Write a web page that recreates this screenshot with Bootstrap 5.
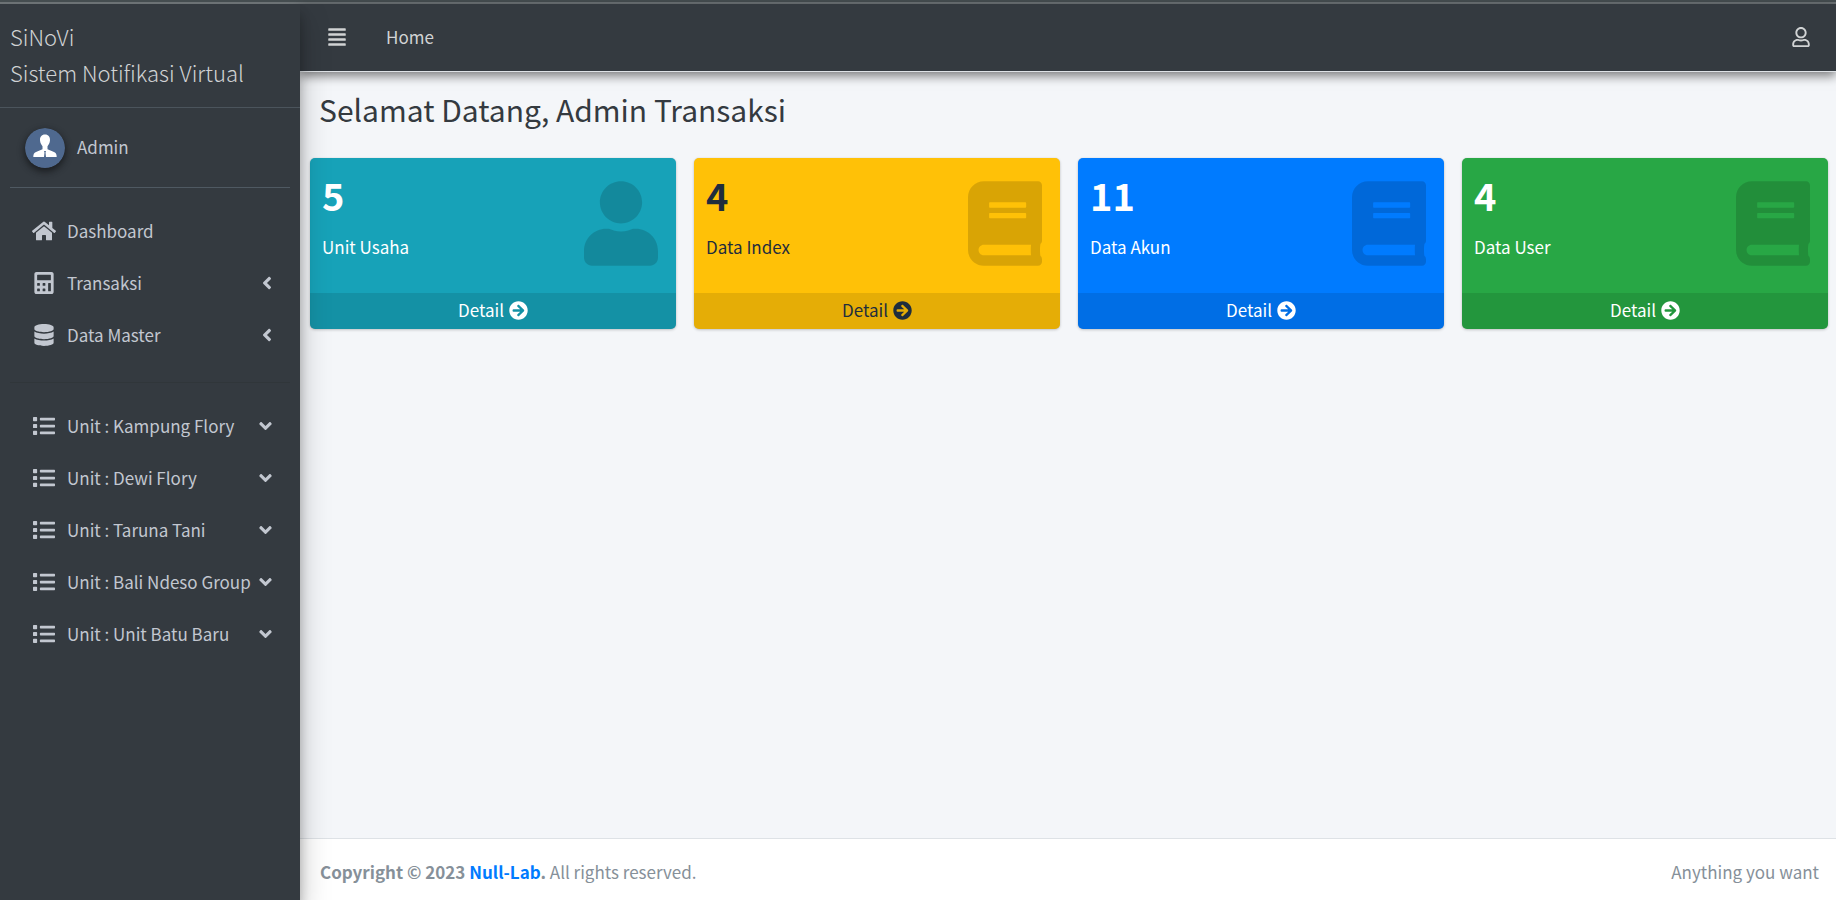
<!DOCTYPE html>
<html lang="id">
<head>
<meta charset="utf-8">
<meta name="viewport" content="width=device-width, initial-scale=1">
<title>SiNoVi - Dashboard</title>
<link href="https://cdn.jsdelivr.net/npm/bootstrap@5.3.0/dist/css/bootstrap.min.css" rel="stylesheet">
<style>
  body { font-family: "Noto Sans CJK SC", "Open Sans", sans-serif; font-size: 17px; line-height: 30px; background: #f4f6f9; color: #212529; }
  a { text-decoration: none; }
  svg { fill: currentColor; flex: none; }
  .top-strip { height: 4px; background: #6c7275; border-top: 2px solid #454d50; }
  .side { width: 300px; flex: none; background: #343a40; color: #c2c7d0; z-index: 3; box-shadow: 0 14px 28px rgba(0,0,0,.25), 0 10px 10px rgba(0,0,0,.22); clip-path: inset(0 -60px 0 0); }
  .side a { color: #c2c7d0; }
  .side .brand-text { display: block; padding: 14px 10px 17px; font-size: 22px; font-weight: 300; line-height: 36px; color: #d0d2d4; border-bottom: 1px solid #4b545c; }
  .user-panel { margin: 0 10px; padding: 19px 15px; height: 80px; border-bottom: 1px solid #4f5962; }
  .user-panel a { padding-bottom: 2px; }
  .avatar { border-radius: 50%; box-shadow: 0 3px 6px rgba(0,0,0,.3), 0 3px 8px rgba(0,0,0,.3); }
  .side-menu { padding: 17px 10px 0; }
  .side-menu a { height: 52px; padding: 0 18px 0 22px; }
  .side-menu a > svg:first-child { width: 24px; height: 22px; margin-right: 11px; }
  .side-menu .item-label { flex: 1; white-space: nowrap; }
  .split { height: 1px; margin: 21px 0 17px; background: #30363a; }
  .topbar { height: 68px; flex: none; background: #343a40; border-bottom: 1px solid #dee2e6; padding: 0 26px 2px 28px; box-shadow: 0 4px 10px rgba(0,0,0,.5); z-index: 2; }
  .topbar a, .topbar button { color: #d1d3d4; }
  .topbar button { background: none; border: 0; padding: 0; display: flex; }
  .page-title { font-size: 30px; font-weight: 400; line-height: 44px; margin: 0; padding: 15px 19px 27px; color: #343a40; }
  .stats { display: grid; grid-template-columns: repeat(4, 1fr); gap: 18px; padding: 0 8px 0 10px; }
  .stat { border-radius: 5px; overflow: hidden; color: #fff; box-shadow: 0 0 1px rgba(0,0,0,.13), 0 1px 3px rgba(0,0,0,.2); }
  .stat-body { height: 135px; padding: 12px 18px 0 12px; }
  .stat-num { font-size: 38px; font-weight: 700; line-height: 50px; margin: 0 0 12px; }
  .stat-body svg { width: 74px; height: 85px; margin-top: 11px; color: rgba(0,0,0,.15); }
  .stat-link { height: 36px; padding-bottom: 2px; background: rgba(0,0,0,.1); color: inherit; gap: 5px; }
  .c-info { background: #17a2b8; }
  .c-warning { background: #ffc107; color: #1f2d3d; }
  .c-primary { background: #007bff; }
  .c-success { background: #28a745; }
  .foot { height: 62px; flex: none; padding: 4px 17px 0 20px; border-top: 1px solid #dee2e6; background: #fff; color: #869099; }
  .foot a { color: #007bff; }
  @media (max-width: 1100px) { .stats { grid-template-columns: repeat(2, 1fr); } }
</style>
</head>
<body class="d-flex flex-column min-vh-100">
<svg class="d-none" aria-hidden="true">
  <symbol id="i-bars" viewBox="0 0 448 512"><path d="M432 416H16a16 16 0 0 0-16 16v32a16 16 0 0 0 16 16h416a16 16 0 0 0 16-16v-32a16 16 0 0 0-16-16zm0-128H16a16 16 0 0 0-16 16v32a16 16 0 0 0 16 16h416a16 16 0 0 0 16-16v-32a16 16 0 0 0-16-16zm0-128H16a16 16 0 0 0-16 16v32a16 16 0 0 0 16 16h416a16 16 0 0 0 16-16v-32a16 16 0 0 0-16-16zm0-128H16A16 16 0 0 0 0 48v32a16 16 0 0 0 16 16h416a16 16 0 0 0 16-16V48a16 16 0 0 0-16-16z"/></symbol>
  <symbol id="i-user-o" viewBox="0 0 448 512"><path d="M313.6 304c-28.7 0-42.5 16-89.6 16-47.1 0-60.8-16-89.6-16C60.2 304 0 364.2 0 438.4V464c0 26.5 21.5 48 48 48h352c26.5 0 48-21.5 48-48v-25.6c0-74.2-60.2-134.4-134.4-134.4zM400 464H48v-25.6c0-47.6 38.8-86.4 86.4-86.4 14.6 0 38.3 16 89.6 16 51.7 0 74.9-16 89.6-16 47.6 0 86.4 38.8 86.4 86.4V464zM224 288c79.5 0 144-64.5 144-144S303.5 0 224 0 80 64.5 80 144s64.5 144 144 144zm0-240c52.9 0 96 43.1 96 96s-43.1 96-96 96-96-43.1-96-96 43.1-96 96-96z"/></symbol>
  <symbol id="i-user" viewBox="0 0 448 512"><path d="M224 256c70.7 0 128-57.3 128-128S294.7 0 224 0 96 57.3 96 128s57.3 128 128 128zm89.6 32h-16.7c-22.2 10.2-46.9 16-72.9 16s-50.6-5.8-72.9-16h-16.7C60.2 288 0 348.2 0 422.4V464c0 26.5 21.5 48 48 48h352c26.5 0 48-21.5 48-48v-41.6c0-74.2-60.2-134.4-134.4-134.4z"/></symbol>
  <symbol id="i-book" viewBox="0 0 448 512"><path d="M448 360V24c0-13.3-10.7-24-24-24H96C43 0 0 43 0 96v320c0 53 43 96 96 96h328c13.3 0 24-10.7 24-24v-16c0-7.5-3.5-14.3-8.9-18.7-4.2-15.4-4.2-59.3 0-74.7 5.4-4.3 8.9-11.1 8.9-18.6zM128 134c0-3.3 2.7-6 6-6h212c3.3 0 6 2.7 6 6v20c0 3.3-2.7 6-6 6H134c-3.3 0-6-2.7-6-6v-20zm0 64c0-3.3 2.7-6 6-6h212c3.3 0 6 2.7 6 6v20c0 3.3-2.7 6-6 6H134c-3.3 0-6-2.7-6-6v-20zm253.4 250H96c-17.7 0-32-14.3-32-32 0-17.6 14.4-32 32-32h285.4c-1.9 17.1-1.9 46.9 0 64z"/></symbol>
  <symbol id="i-go" viewBox="0 0 512 512"><path d="M256 8c137 0 248 111 248 248S393 504 256 504 8 393 8 256 119 8 256 8zm-28.9 143.6l75.5 72.4H120c-13.3 0-24 10.7-24 24v16c0 13.3 10.7 24 24 24h182.6l-75.5 72.4c-9.7 9.3-9.9 24.8-.4 34.3l11 10.9c9.4 9.4 24.6 9.4 33.9 0L404.3 273c9.4-9.4 9.4-24.6 0-33.9L271.6 106.3c-9.4-9.4-24.6-9.4-33.9 0l-11 10.9c-9.5 9.6-9.3 25.1.4 34.4z"/></symbol>
  <symbol id="i-home" viewBox="0 0 576 512"><path d="M280.37 148.26L96 300.11V464a16 16 0 0 0 16 16l112.06-.29a16 16 0 0 0 15.92-16V368a16 16 0 0 1 16-16h64a16 16 0 0 1 16 16v95.64a16 16 0 0 0 16 16.05L464 480a16 16 0 0 0 16-16V300L295.67 148.26a12.19 12.19 0 0 0-15.3 0zM571.6 251.47L488 182.56V44.05a12 12 0 0 0-12-12h-56a12 12 0 0 0-12 12v72.61L318.47 43a48 48 0 0 0-61 0L4.34 251.47a12 12 0 0 0-1.6 16.9l25.5 31A12 12 0 0 0 45.15 301l235.22-193.74a12.19 12.19 0 0 1 15.3 0L530.9 301a12 12 0 0 0 16.9-1.6l25.5-31a12 12 0 0 0-1.7-16.93z"/></symbol>
  <symbol id="i-calc" viewBox="0 0 448 512"><path fill-rule="evenodd" d="M400 0H48C22 0 0 22 0 48v416c0 26 22 48 48 48h352c26 0 48-22 48-48V48c0-26-22-48-48-48zM77 64h294q13 0 13 13v102q0 13-13 13H77q-13 0-13-13V77q0-13 13-13zM77 256h38q13 0 13 13v38q0 13-13 13H77q-13 0-13-13v-38q0-13 13-13zM205 256h38q13 0 13 13v38q0 13-13 13h-38q-13 0-13-13v-38q0-13 13-13zM77 384h38q13 0 13 13v38q0 13-13 13H77q-13 0-13-13v-38q0-13 13-13zM205 384h38q13 0 13 13v38q0 13-13 13h-38q-13 0-13-13v-38q0-13 13-13zM333 256h38q13 0 13 13v166q0 13-13 13h-38q-13 0-13-13V269q0-13 13-13z"/></symbol>
  <symbol id="i-db" viewBox="0 0 448 512"><path d="M448 73.143v45.714C448 159.143 347.667 192 224 192S0 159.143 0 118.857V73.143C0 32.857 100.333 0 224 0s224 32.857 224 73.143zM448 176v102.857C448 319.143 347.667 352 224 352S0 319.143 0 278.857V176c48.125 33.143 136.208 48.572 224 48.572S399.874 209.143 448 176zm0 160v102.857C448 479.143 347.667 512 224 512S0 479.143 0 438.857V336c48.125 33.143 136.208 48.572 224 48.572S399.874 369.143 448 336z"/></symbol>
  <symbol id="i-list" viewBox="0 0 512 512"><path d="M80 368H16a16 16 0 0 0-16 16v64a16 16 0 0 0 16 16h64a16 16 0 0 0 16-16v-64a16 16 0 0 0-16-16zm0-320H16A16 16 0 0 0 0 64v64a16 16 0 0 0 16 16h64a16 16 0 0 0 16-16V64a16 16 0 0 0-16-16zm0 160H16a16 16 0 0 0-16 16v64a16 16 0 0 0 16 16h64a16 16 0 0 0 16-16v-64a16 16 0 0 0-16-16zm416 176H176a16 16 0 0 0-16 16v32a16 16 0 0 0 16 16h320a16 16 0 0 0 16-16v-32a16 16 0 0 0-16-16zm0-320H176a16 16 0 0 0-16 16v32a16 16 0 0 0 16 16h320a16 16 0 0 0 16-16V80a16 16 0 0 0-16-16zm0 160H176a16 16 0 0 0-16 16v32a16 16 0 0 0 16 16h320a16 16 0 0 0 16-16v-32a16 16 0 0 0-16-16z"/></symbol>
  <symbol id="i-left" viewBox="0 0 256 512"><path d="M31.7 239l136-136c9.4-9.4 24.6-9.4 33.9 0l22.6 22.6c9.4 9.4 9.4 24.6 0 33.9L127.9 256l96.4 96.4c9.4 9.4 9.4 24.6 0 33.9L201.7 409c-9.4 9.4-24.6 9.4-33.9 0l-136-136c-9.5-9.4-9.5-24.6-.1-34z"/></symbol>
  <symbol id="i-down" viewBox="0 0 320 512"><path d="M143 352.3L7 216.3c-9.4-9.4-9.4-24.6 0-33.9l22.6-22.6c9.4-9.4 24.6-9.4 33.9 0l96.4 96.4 96.4-96.4c9.4-9.4 24.6-9.4 33.9 0l22.6 22.6c9.4 9.4 9.4 24.6 0 33.9l-136 136c-9.2 9.4-24.4 9.4-33.8 0z"/></symbol>
</svg>

<div class="top-strip"></div>
<div class="d-flex flex-grow-1">
  <aside class="side">
    <a href="#" class="brand-text">SiNoVi<br>Sistem Notifikasi Virtual</a>
    <div class="user-panel d-flex align-items-center">
      <svg class="avatar" width="40" height="40" viewBox="0 0 40 40"><circle cx="20" cy="20" r="20" fill="#4f698f"/><path fill="#fff" d="M20 6.5c-3.5 0-5.2 2.600-5 5.700.2 3 1.400 4.500 2.500 6v3L11 24c-2 .8-2.700 2.500-2.700 5h23.400c0-2.500-.7-4.200-2.700-5l-6.500-2.800v-3c1.100-1.500 2.300-3 2.500-6 .2-3.100-1.500-5.700-5-5.700z"/><path fill="#4f698f" d="M19 23h2l-.5 1.500L21 29h-2l.5-4.500z"/></svg>
      <a href="#" class="ms-2 ps-1">Admin</a>
    </div>
    <nav class="side-menu">
      <a href="#" class="d-flex align-items-center"><svg><use href="#i-home"/></svg><span class="item-label">Dashboard</span></a>
      <a href="#" class="d-flex align-items-center"><svg><use href="#i-calc"/></svg><span class="item-label">Transaksi</span><svg width="10" height="20"><use href="#i-left"/></svg></a>
      <a href="#" class="d-flex align-items-center"><svg><use href="#i-db"/></svg><span class="item-label">Data Master</span><svg width="10" height="20"><use href="#i-left"/></svg></a>
      <div class="split"></div>
      <a href="#" class="d-flex align-items-center"><svg><use href="#i-list"/></svg><span class="item-label">Unit : Kampung Flory</span><svg width="13" height="20"><use href="#i-down"/></svg></a>
      <a href="#" class="d-flex align-items-center"><svg><use href="#i-list"/></svg><span class="item-label">Unit : Dewi Flory</span><svg width="13" height="20"><use href="#i-down"/></svg></a>
      <a href="#" class="d-flex align-items-center"><svg><use href="#i-list"/></svg><span class="item-label">Unit : Taruna Tani</span><svg width="13" height="20"><use href="#i-down"/></svg></a>
      <a href="#" class="d-flex align-items-center"><svg><use href="#i-list"/></svg><span class="item-label">Unit : Bali Ndeso Group</span><svg width="13" height="20"><use href="#i-down"/></svg></a>
      <a href="#" class="d-flex align-items-center"><svg><use href="#i-list"/></svg><span class="item-label">Unit : Unit Batu Baru</span><svg width="13" height="20"><use href="#i-down"/></svg></a>
    </nav>
  </aside>

  <div class="d-flex flex-column flex-grow-1">
    <header class="topbar d-flex align-items-center">
      <button type="button" aria-label="Menu"><svg width="18" height="20"><use href="#i-bars"/></svg></button>
      <a href="#" class="ms-3 ps-3 ms-4">Home</a>
      <a href="#" class="ms-auto d-flex" aria-label="Akun"><svg width="18" height="20"><use href="#i-user-o"/></svg></a>
    </header>
    <main class="flex-grow-1">
      <h1 class="page-title">Selamat Datang, Admin Transaksi</h1>
      <div class="stats">
        <section class="stat c-info">
          <div class="stat-body d-flex justify-content-between"><div><h2 class="stat-num">5</h2><p class="m-0">Unit Usaha</p></div><svg><use href="#i-user"/></svg></div>
          <a href="#" class="stat-link d-flex align-items-center justify-content-center">Detail <svg width="19" height="19"><use href="#i-go"/></svg></a>
        </section>
        <section class="stat c-warning">
          <div class="stat-body d-flex justify-content-between"><div><h2 class="stat-num">4</h2><p class="m-0">Data Index</p></div><svg><use href="#i-book"/></svg></div>
          <a href="#" class="stat-link d-flex align-items-center justify-content-center">Detail <svg width="19" height="19"><use href="#i-go"/></svg></a>
        </section>
        <section class="stat c-primary">
          <div class="stat-body d-flex justify-content-between"><div><h2 class="stat-num">11</h2><p class="m-0">Data Akun</p></div><svg><use href="#i-book"/></svg></div>
          <a href="#" class="stat-link d-flex align-items-center justify-content-center">Detail <svg width="19" height="19"><use href="#i-go"/></svg></a>
        </section>
        <section class="stat c-success">
          <div class="stat-body d-flex justify-content-between"><div><h2 class="stat-num">4</h2><p class="m-0">Data User</p></div><svg><use href="#i-book"/></svg></div>
          <a href="#" class="stat-link d-flex align-items-center justify-content-center">Detail <svg width="19" height="19"><use href="#i-go"/></svg></a>
        </section>
      </div>
    </main>
    <footer class="foot d-flex align-items-center justify-content-between">
      <div><strong>Copyright © 2023 <a href="#">Null-Lab</a>.</strong> All rights reserved.</div>
      <div>Anything you want</div>
    </footer>
  </div>
</div>
<script src="https://cdn.jsdelivr.net/npm/bootstrap@5.3.0/dist/js/bootstrap.bundle.min.js"></script>
</body>
</html>
